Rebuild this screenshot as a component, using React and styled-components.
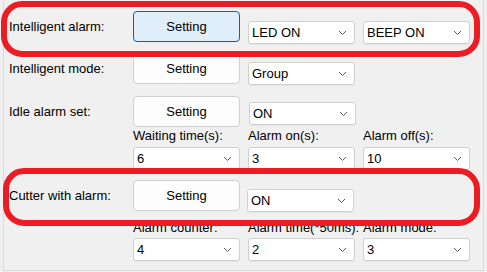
import React from 'react';
import styled, { createGlobalStyle } from 'styled-components';

const GlobalStyle = createGlobalStyle`
  html, body {
    margin: 0;
    padding: 0;
    background: #f0f0f0;
  }
  body {
    font-family: "Liberation Sans", Arial, sans-serif;
    font-size: 13px;
    color: #000;
  }
`;

const Page = styled.div`
  position: relative;
  width: 487px;
  height: 272px;
  overflow: hidden;
`;

const Panel = styled.div`
  box-sizing: border-box;
  margin-left: 3px;
  width: 481px;
  height: 271px;
  border: 1px solid #dadada;
  border-top: none;
  padding: 11px 0 0 5px;
  display: flex;
  flex-direction: column;
`;

const SettingRow = styled.div`
  display: flex;
  align-items: flex-start;
  margin-top: ${(p) => p.$gap || 0}px;
`;

const Label = styled.div`
  width: 124px;
  line-height: 31px;
  white-space: nowrap;
`;

const Button = styled.button`
  box-sizing: border-box;
  width: 107px;
  height: 31px;
  margin: 0;
  padding: 0;
  font-family: inherit;
  font-size: 13px;
  color: #000;
  background: ${(p) => (p.$focused ? '#e0eef9' : '#fdfdfd')};
  border: 1px solid ${(p) => (p.$focused ? '#0067c0' : '#d0d0d0')};
  border-radius: 4px;
`;

const Combos = styled.div`
  display: flex;
  gap: 8px;
  margin-left: ${(p) => p.$shift ?? 8}px;
  margin-top: ${(p) => p.$offset || 0}px;
`;

const ComboBox = styled.div`
  box-sizing: border-box;
  width: 107px;
  height: 23px;
  background: #fff;
  border: 1px solid #d0d0d0;
  border-radius: 3px;
  box-shadow: 0 1px 0 rgba(0, 0, 0, 0.04);
  display: flex;
  align-items: center;
  justify-content: space-between;
  padding: 0 7px 0 3px;
  font-size: 13px;
  white-space: nowrap;
`;

const FieldLabels = styled.div`
  display: grid;
  grid-template-columns: repeat(3, 107px);
  column-gap: 8px;
  margin-left: 124px;
  margin-top: ${(p) => p.$gap || 0}px;
  line-height: 16px;
  white-space: nowrap;
`;

const FieldCombos = styled(FieldLabels)`
  line-height: normal;
`;

const Highlight = styled.div`
  position: absolute;
  box-sizing: border-box;
  left: ${(p) => p.$x}px;
  top: ${(p) => p.$y}px;
  width: ${(p) => p.$w}px;
  height: ${(p) => p.$h}px;
  border: 6px solid #ec1c24;
  border-radius: 21px;
  pointer-events: none;
`;

const Chevron = () => (
  <svg width="9" height="6" viewBox="0 0 9 6">
    <path d="M1 1 L4.5 4.5 L8 1" fill="none" stroke="#5a5a5a" strokeWidth="1" />
  </svg>
);

const Combo = ({ value }) => (
  <ComboBox>
    <span>{value}</span>
    <Chevron />
  </ComboBox>
);

const App = () => {
  return (
    <Page>
      <GlobalStyle />
      <Panel>
        <SettingRow>
          <Label>Intelligent alarm:</Label>
          <Button $focused>Setting</Button>
          <Combos $offset={10}>
            <Combo value="LED ON" />
            <Combo value="BEEP ON" />
          </Combos>
        </SettingRow>

        <SettingRow $gap={9}>
          <Label>Intelligent mode:</Label>
          <Button>Setting</Button>
          <Combos $offset={9}>
            <Combo value="Group" />
          </Combos>
        </SettingRow>

        <SettingRow $gap={11}>
          <Label>Idle alarm set:</Label>
          <Button>Setting</Button>
          <Combos $offset={6} $shift={9}>
            <Combo value="ON" />
          </Combos>
        </SettingRow>

        <FieldLabels $gap={1}>
          <span>Waiting time(s):</span>
          <span>Alarm on(s):</span>
          <span>Alarm off(s):</span>
        </FieldLabels>
        <FieldCombos $gap={3}>
          <Combo value="6" />
          <Combo value="3" />
          <Combo value="10" />
        </FieldCombos>

        <SettingRow $gap={10}>
          <Label>Cutter with alarm:</Label>
          <Button>Setting</Button>
          <Combos $offset={9} $shift={7}>
            <Combo value="ON" />
          </Combos>
        </SettingRow>

        <FieldLabels $gap={8}>
          <span>Alarm counter:</span>
          <span>Alarm time(*50ms):</span>
          <span>Alarm mode:</span>
        </FieldLabels>
        <FieldCombos $gap={2}>
          <Combo value="4" />
          <Combo value="2" />
          <Combo value="3" />
        </FieldCombos>
      </Panel>

      <Highlight $x={1} $y={1} $w={479} $h={56} />
      <Highlight $x={3} $y={168} $w={477} $h={58} />
    </Page>
  );
};

export default App;
